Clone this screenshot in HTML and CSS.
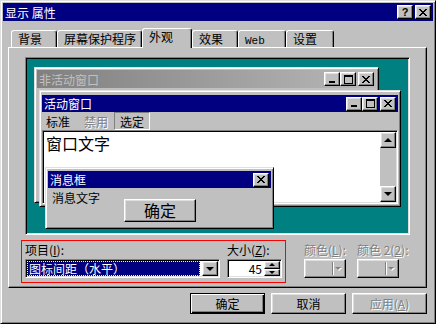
FILE: index.html
```html
<!DOCTYPE html>
<html lang="zh-CN">
<head>
    <link rel="stylesheet" href="styles.css">
    <meta charset="UTF-8">
    <meta name="viewport" content="width=device-width, initial-scale=1.0">
    <title>显示 属性</title>
</head>
<body>
    <div class="dialog">
        <div class="titlebar">
            <span class="caption">显示 属性</span>
            <div class="caption-btns">
                <span class="cbtn help">?</span>
                <span class="cbtn"><svg width="8" height="7"><path d="M0 0h2v1H0zM6 0h2v1H6zM1 1h2v1H1zM5 1h2v1H5zM2 2h4v1H2zM3 3h2v1H3zM2 4h4v1H2zM1 5h2v1H1zM5 5h2v1H5zM0 6h2v1H0zM6 6h2v1H6z"/></svg></span>
            </div>
        </div>

        <div class="content">
            <div class="tabs">
                <div class="tab tab-narrow">背景</div>
                <div class="tab tab-wide">屏幕保护程序</div>
                <div class="tab tab-active">外观</div>
                <div class="tab tab-narrow">效果</div>
                <div class="tab tab-mid"><span class="latin">Web</span></div>
                <div class="tab tab-mid">设置</div>
            </div>

            <div class="panel">
                <div class="preview">
                    <!-- 非活动窗口 -->
                    <div class="win win-inactive">
                        <div class="wtitle wtitle-inactive">
                            <span>非活动窗口</span>
                            <div class="wbtns">
                                <span class="cbtn"><svg width="8" height="7"><path d="M1 5h6v2H1z"/></svg></span>
                                <span class="cbtn"><svg width="9" height="9"><path fill-rule="evenodd" d="M0 0h9v9H0zM1 2v6h7V2z"/></svg></span>
                                <span class="cbtn spaced"><svg width="8" height="7"><path d="M0 0h2v1H0zM6 0h2v1H6zM1 1h2v1H1zM5 1h2v1H5zM2 2h4v1H2zM3 3h2v1H3zM2 4h4v1H2zM1 5h2v1H1zM5 5h2v1H5zM0 6h2v1H0zM6 6h2v1H6z"/></svg></span>
                            </div>
                        </div>
                    </div>

                    <!-- 活动窗口 -->
                    <div class="win win-active">
                        <div class="wtitle">
                            <span>活动窗口</span>
                            <div class="wbtns">
                                <span class="cbtn"><svg width="8" height="7"><path d="M1 5h6v2H1z"/></svg></span>
                                <span class="cbtn"><svg width="9" height="9"><path fill-rule="evenodd" d="M0 0h9v9H0zM1 2v6h7V2z"/></svg></span>
                                <span class="cbtn spaced"><svg width="8" height="7"><path d="M0 0h2v1H0zM6 0h2v1H6zM1 1h2v1H1zM5 1h2v1H5zM2 2h4v1H2zM3 3h2v1H3zM2 4h4v1H2zM1 5h2v1H1zM5 5h2v1H5zM0 6h2v1H0zM6 6h2v1H6z"/></svg></span>
                            </div>
                        </div>
                        <div class="menubar">
                            <span class="menu-item">标准</span>
                            <span class="menu-item disabled">禁用</span>
                            <span class="menu-item selected">选定</span>
                        </div>
                        <div class="textarea sunken">
                            <div class="wintext">窗口文字</div>
                            <div class="scrollbar">
                                <span class="sbtn raised"><i class="arrow-up"></i></span>
                                <span class="track"></span>
                                <span class="sbtn raised"><i class="arrow-down"></i></span>
                            </div>
                        </div>
                    </div>

                    <!-- 消息框 -->
                    <div class="win win-msg">
                        <div class="wtitle">
                            <span>消息框</span>
                            <div class="wbtns">
                                <span class="cbtn"><svg width="8" height="7"><path d="M0 0h2v1H0zM6 0h2v1H6zM1 1h2v1H1zM5 1h2v1H5zM2 2h4v1H2zM3 3h2v1H3zM2 4h4v1H2zM1 5h2v1H1zM5 5h2v1H5zM0 6h2v1H0zM6 6h2v1H6z"/></svg></span>
                            </div>
                        </div>
                        <div class="msg-body">
                            <span class="msg-text">消息文字</span>
                            <span class="msg-ok raised">确定</span>
                        </div>
                    </div>
                </div>

                <div class="controls">
                    <div class="item-box">
                        <div class="field">
                            <span class="field-label">项目(<u>I</u>):</span>
                            <div class="combo sunken">
                                <span class="combo-value">图标间距（水平）</span>
                                <span class="drop-btn raised"><i class="arrow-down"></i></span>
                            </div>
                        </div>
                        <div class="field">
                            <span class="field-label">大小(<u>Z</u>):</span>
                            <div class="spin sunken">
                                <span class="spin-value">45</span>
                                <div class="spin-btns">
                                    <span class="spin-btn raised"><i class="tri-up"></i></span>
                                    <span class="spin-btn raised"><i class="tri-down"></i></span>
                                </div>
                            </div>
                        </div>
                    </div>
                    <div class="field color-field first">
                        <span class="field-label disabled">颜色(<u>L</u>):</span>
                        <div class="color-btn raised"><span class="swatch"></span><span class="color-arrow"><i class="tri-down gray"></i></span></div>
                    </div>
                    <div class="field color-field">
                        <span class="field-label disabled">颜色 2(<u>2</u>):</span>
                        <div class="color-btn raised"><span class="swatch"></span><span class="color-arrow"><i class="tri-down gray"></i></span></div>
                    </div>
                </div>
            </div>

            <div class="actions">
                <span class="btn raised default">确定</span>
                <span class="btn raised">取消</span>
                <span class="btn raised disabled">应用(<u>A</u>)</span>
            </div>
        </div>
    </div>
</body>
</html>
```

FILE: styles.css
```css
* {
    margin: 0;
    padding: 0;
    box-sizing: border-box;
}

body {
    width: 436px;
    height: 324px;
    overflow: hidden;
    background: #c0c0c0;
    color: #000;
    font-family: "Noto Sans CJK SC", "Noto Sans", sans-serif;
    font-size: 12px;
    line-height: 13px;
}

svg {
    display: block;
    shape-rendering: crispEdges;
}

i {
    display: block;
}

/* 3d edges */
.raised {
    background: #c0c0c0;
    border: 1px solid;
    border-color: #fff #000 #000 #fff;
    box-shadow: inset -1px -1px #808080, inset 1px 1px #dfdfdf;
}

.sunken {
    border: 1px solid;
    border-color: #808080 #fff #fff #808080;
    box-shadow: inset 1px 1px #000, inset -1px -1px #dfdfdf;
}

.disabled {
    color: #808080;
    text-shadow: 1px 1px #fff;
}

/* dialog frame */
.dialog {
    width: 436px;
    height: 324px;
    padding: 2px;
    display: flex;
    flex-direction: column;
    border: 1px solid;
    border-color: #dfdfdf #000 #000 #dfdfdf;
    box-shadow: inset 1px 1px #fff, inset -1px -1px #808080;
}

.titlebar {
    height: 18px;
    display: flex;
    align-items: center;
    justify-content: space-between;
    padding: 0 2px;
    background: #000080;
    color: #fff;
}

.caption-btns {
    display: flex;
    gap: 2px;
}

.cbtn {
    width: 16px;
    height: 14px;
    display: flex;
    align-items: center;
    justify-content: center;
    background: #c0c0c0;
    color: #000;
    border: 1px solid;
    border-color: #fff #000 #000 #fff;
    box-shadow: inset -1px -1px #808080, inset 1px 1px #dfdfdf;
}

    .cbtn.help {
        font-family: "Liberation Sans", sans-serif;
        font-weight: bold;
        font-size: 11px;
        line-height: 11px;
    }

    .cbtn.spaced {
        margin-left: 2px;
    }

.content {
    flex: 1;
    display: flex;
    flex-direction: column;
    padding: 7px 6px 0 5px;
}

/* tabs */
.tabs {
    height: 19px;
    display: flex;
    align-items: flex-end;
    padding-left: 3px;
    position: relative;
    z-index: 1;
}

.tab {
    height: 17px;
    padding: 1px 0 0 6px;
    background: #c0c0c0;
    border: 1px solid;
    border-color: #fff #000 transparent #fff;
    border-bottom: 0;
    border-radius: 3px 3px 0 0;
    box-shadow: inset -1px 0 #808080;
    white-space: nowrap;
}

.tab-narrow {
    width: 46px;
}

.tab-wide {
    width: 85px;
}

.tab-mid {
    width: 48px;
}

.tab-active {
    width: 50px;
    height: 20px;
    margin-bottom: -1px;
}

.latin {
    font-family: "Liberation Mono", monospace;
    font-size: 11px;
}

.panel {
    height: 241px;
    padding: 9px 16px 0;
    border: 1px solid;
    border-color: #fff #000 #000 #fff;
    box-shadow: inset -1px -1px #808080;
}

/* preview */
.preview {
    height: 178px;
    position: relative;
    background: #008080;
    border: 1px solid;
    border-color: #808080 #fff #fff #808080;
    box-shadow: inset 1px 1px #000, inset -1px -1px #dfdfdf;
}

.win {
    position: absolute;
    display: flex;
    flex-direction: column;
    padding: 2px;
    background: #c0c0c0;
    border: 1px solid;
    border-color: #dfdfdf #000 #000 #dfdfdf;
    box-shadow: inset 1px 1px #fff, inset -1px -1px #808080;
}

.win-inactive {
    left: 8px;
    top: 9px;
    width: 345px;
    height: 136px;
}

.win-active {
    left: 13px;
    top: 32px;
    width: 362px;
    height: 117px;
    padding-top: 4px;
}

.win-msg {
    left: 19px;
    top: 109px;
    width: 229px;
    height: 62px;
    padding-top: 3px;
}

.wtitle {
    height: 17px;
    flex: none;
    display: flex;
    align-items: center;
    justify-content: space-between;
    padding: 0 2px;
    background: #000080;
    color: #fff;
}

.wtitle-inactive {
    height: 18px;
    background: linear-gradient(to right, #808080, #b8b8b8);
    color: #c0c0c0;
}

.wbtns {
    display: flex;
}

.menubar {
    height: 18px;
    flex: none;
    display: flex;
    padding-left: 4px;
}

.menu-item {
    display: flex;
    align-items: center;
    margin-right: 14px;
}

    .menu-item.disabled {
        margin-right: 6px;
    }

    .menu-item.selected {
        padding: 0 5px;
        border: 1px solid;
        border-color: #808080 #fff #fff #808080;
    }

.textarea {
    flex: 1;
    display: flex;
    padding: 1px;
    background: #fff;
}

.wintext {
    flex: 1;
    padding: 2px 0 0 2px;
    font-size: 16px;
    line-height: 18px;
}

.scrollbar {
    width: 16px;
    display: flex;
    flex-direction: column;
}

.sbtn {
    height: 16px;
    display: flex;
    align-items: center;
    justify-content: center;
}

.track {
    flex: 1;
    background: #c0c0c0;
}

.arrow-up {
    border: 4px solid transparent;
    border-top: 0;
    border-bottom-color: #000;
}

.arrow-down {
    border: 4px solid transparent;
    border-bottom: 0;
    border-top-color: #000;
}

.msg-body {
    flex: 1;
    display: flex;
    align-items: flex-start;
    padding: 3px 0 0 4px;
}

.msg-ok {
    width: 72px;
    height: 23px;
    margin: 8px 0 0 24px;
    display: flex;
    align-items: center;
    justify-content: center;
    font-size: 16px;
}

/* controls below the preview */
.controls {
    display: flex;
    margin: 5px 0 0 -4px;
}

.item-box {
    display: flex;
    gap: 7px;
    padding: 2px 3px 4px;
    border: 1px solid #ff0000;
}

.field {
    display: flex;
    flex-direction: column;
    gap: 3px;
}

.field-label {
    height: 13px;
    white-space: nowrap;
}

.combo {
    width: 195px;
    height: 19px;
    display: flex;
    padding: 1px;
    background: #fff;
}

.combo-value {
    flex: 1;
    margin-right: 2px;
    padding-left: 1px;
    background: #000080;
    color: #fff;
    border: 1px dotted #ffff80;
    line-height: 13px;
}

.drop-btn {
    width: 16px;
    display: flex;
    align-items: center;
    justify-content: center;
}

.spin {
    width: 55px;
    height: 19px;
    display: flex;
    padding: 1px;
    background: #fff;
}

.spin-value {
    flex: 1;
    text-align: right;
    padding-right: 2px;
    line-height: 15px;
}

.spin-btns {
    width: 16px;
    display: flex;
    flex-direction: column;
}

.spin-btn {
    flex: 1;
    display: flex;
    align-items: center;
    justify-content: center;
}

.tri-up {
    border: 3px solid transparent;
    border-top: 0;
    border-bottom-color: #000;
}

.tri-down {
    border: 3px solid transparent;
    border-bottom: 0;
    border-top-color: #000;
}

    .tri-down.gray {
        border-top-color: #808080;
        filter: drop-shadow(1px 1px 0 #fff);
    }

.color-field {
    width: 56px;
    padding-top: 3px;
}

    .color-field.first {
        margin-left: 18px;
    }

.color-btn {
    width: 42px;
    height: 19px;
    display: flex;
    padding: 2px;
}

.swatch {
    flex: 1;
    border-right: 1px solid #808080;
    box-shadow: 1px 0 #fff;
}

.color-arrow {
    width: 10px;
    display: flex;
    align-items: center;
    justify-content: center;
}

/* dialog buttons */
.actions {
    display: flex;
    justify-content: flex-end;
    gap: 6px;
    margin-top: 5px;
}

.btn {
    width: 75px;
    height: 21px;
    display: flex;
    align-items: center;
    justify-content: center;
}

    .btn.default {
        border-color: #000;
        box-shadow: inset 1px 1px #fff, inset -1px -1px #000, inset -2px -2px #808080;
    }
```
